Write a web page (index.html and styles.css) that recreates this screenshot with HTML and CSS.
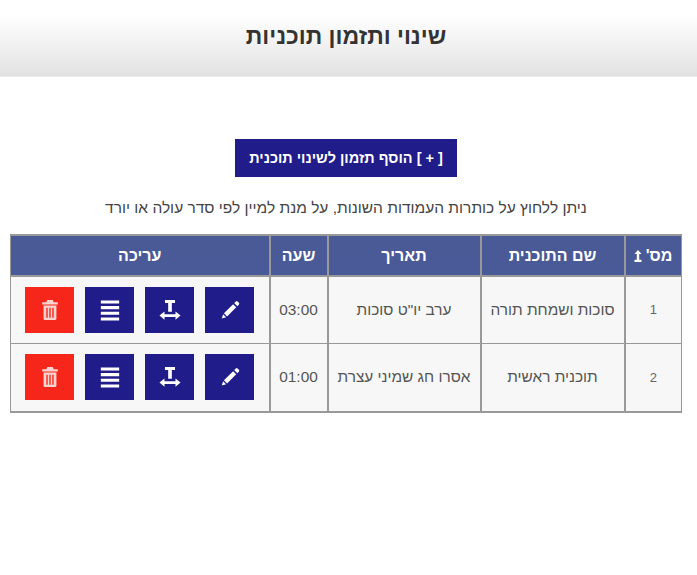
FILE: index.html
```html
<!DOCTYPE html>
<html lang="he" dir="rtl">
<head>
    <meta charset="UTF-8">
    <meta name="viewport" content="width=device-width, initial-scale=1.0">
    <title>שינוי ותזמון תוכניות</title>
    <link rel="stylesheet" href="styles.css">
</head>
<body>
    <header class="page-head">
        <h1>שינוי ותזמון תוכניות</h1>
    </header>

    <main class="content">
        <a class="add-btn" href="#">[ + ] הוסף תזמון לשינוי תוכנית</a>
        <p class="note">ניתן ללחוץ על כותרות העמודות השונות, על מנת למיין לפי סדר עולה או יורד</p>

        <table class="programs">
            <thead>
                <tr>
                    <th class="col-num">מס'
                        <svg class="sort-icon" viewBox="0 0 8 12"><path d="M4 0 7.500 4H5.200V9.800H7.500V12H.5V9.800H2.800V4H.5Z"/></svg>
                    </th>
                    <th class="col-name">שם התוכנית</th>
                    <th class="col-date">תאריך</th>
                    <th class="col-hour">שעה</th>
                    <th>עריכה</th>
                </tr>
            </thead>
            <tbody>
                <tr class="first-row">
                    <td class="num">1</td>
                    <td>סוכות ושמחת תורה</td>
                    <td>ערב יו"ט סוכות</td>
                    <td>03:00</td>
                    <td>
                        <div class="actions">
                            <a class="icon-btn" href="#"><svg viewBox="0 0 24 24"><use href="#i-pencil"/></svg></a>
                            <a class="icon-btn" href="#"><svg viewBox="0 0 24 24"><use href="#i-width"/></svg></a>
                            <a class="icon-btn" href="#"><svg viewBox="0 0 24 24"><use href="#i-lines"/></svg></a>
                            <a class="icon-btn danger" href="#"><svg viewBox="0 0 24 24"><use href="#i-trash"/></svg></a>
                        </div>
                    </td>
                </tr>
                <tr class="last-row">
                    <td class="num">2</td>
                    <td>תוכנית ראשית</td>
                    <td>אסרו חג שמיני עצרת</td>
                    <td>01:00</td>
                    <td>
                        <div class="actions">
                            <a class="icon-btn" href="#"><svg viewBox="0 0 24 24"><use href="#i-pencil"/></svg></a>
                            <a class="icon-btn" href="#"><svg viewBox="0 0 24 24"><use href="#i-width"/></svg></a>
                            <a class="icon-btn" href="#"><svg viewBox="0 0 24 24"><use href="#i-lines"/></svg></a>
                            <a class="icon-btn danger" href="#"><svg viewBox="0 0 24 24"><use href="#i-trash"/></svg></a>
                        </div>
                    </td>
                </tr>
            </tbody>
        </table>
    </main>

    <svg class="icon-defs" aria-hidden="true">
        <symbol id="i-pencil" viewBox="0 0 24 24">
            <path d="M18.400 2.600Q19.300 1.900 20.200 2.600L21.800 4.200Q22.500 5.100 21.800 6L20 7.800 16.600 4.400ZM15.400 5.600 18.800 9 8.800 19 5.400 15.600ZM4.500 16.700 7.700 19.900 3 21.400Z"/>
        </symbol>
        <symbol id="i-width" viewBox="0 0 24 24">
            <path d="M6.500 1H17.500V4.400H14V14H10V4.400H6.500Z"/>
            <path d="M.5 18 6 13.500V16.500H18V13.500L23.500 18 18 22.500V19.500H6V22.500Z"/>
        </symbol>
        <symbol id="i-lines" viewBox="0 0 24 24">
            <path d="M2 1.500H22V4.900H2ZM2 7.700H22V11.100H2ZM2 13.900H22V17.300H2ZM2 20.100H22V23.500H2Z"/>
        </symbol>
        <symbol id="i-trash" viewBox="0 0 24 24">
            <path fill-rule="evenodd" d="M9 1H15L16 3.500H20.500V6H3.500V3.500H8ZM5 7H19V21.500Q19 23 17.500 23H6.500Q5 23 5 21.500ZM8 9.500V20.500H9.500V9.500ZM11.250 9.500V20.500H12.750V9.500ZM14.500 9.500V20.500H16V9.500Z"/>
        </symbol>
    </svg>
</body>
</html>
```

FILE: styles.css
```css
* { box-sizing: border-box; }
body { margin: 0; background: #fff; color: #444; font-family: "Liberation Sans", Arial, sans-serif; }

.page-head { height: 77px; padding: 21px 5px 0 0; background: linear-gradient(#fff 20%, #e2e2e2); border-bottom: 1px solid #ececec; }
.page-head h1 { margin: 0; font-size: 23px; line-height: 30px; text-align: center; color: #333; }

.content { padding: 62px 15px 0 10px; text-align: center; }
.add-btn { display: inline-block; height: 38px; width: 222px; line-height: 38px; background: #201c8a; color: #fff; font-size: 14.5px; font-weight: bold; text-decoration: none; }
.note { margin: 21px 0 16px; font-size: 15.5px; line-height: 20px; color: #444; }

.programs { width: 672px; border-collapse: collapse; table-layout: fixed; background: #f7f7f7; border: 1px solid #999; }
.programs th, .programs td { border: 2px solid #999; text-align: center; }
.programs tbody td { border-width: 1px 2px; }
.programs tr > :first-child { border-right-width: 1px; }
.programs tr > :last-child { border-left-width: 1px; }
.programs tbody tr:last-child td { border-bottom-width: 2px; }
.programs th { height: 41px; background: linear-gradient(#4a5a96, #495a98); color: #fff; font-size: 16px; }
.programs td { height: 68px; font-size: 15.4px; color: #555; }
.programs .first-row td { height: 67px; }
.programs .last-row td { height: 69px; }
.programs td.num { font-size: 13px; color: #666; }
.col-num { width: 57px; }
.col-name { width: 144px; }
.col-date { width: 153px; }
.col-hour { width: 58px; }

.sort-icon { width: 8px; height: 12px; margin-right: -1px; fill: #fff; vertical-align: -1px; }

.actions { display: flex; gap: 11px; justify-content: center; }
.icon-btn { display: flex; align-items: center; justify-content: center; width: 49px; height: 46px; background: #201c8a; }
.icon-btn svg { width: 22px; height: 22px; fill: #fff; }
.icon-btn.danger { background: #f6261a; }
.icon-btn.danger svg { fill: #fbd3cf; }

.icon-defs { display: none; }
```
